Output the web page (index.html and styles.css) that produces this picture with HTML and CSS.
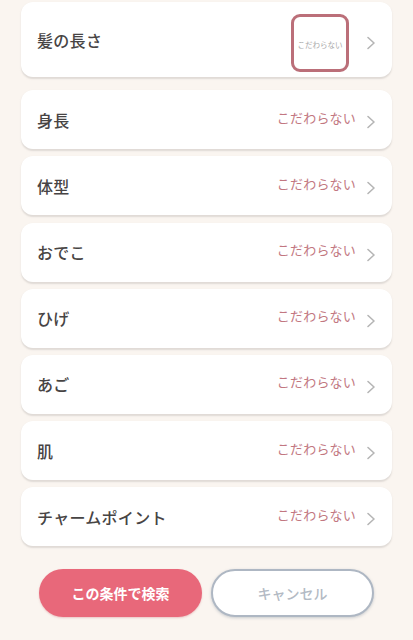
FILE: index.html
```html
<!DOCTYPE html>
<html lang="ja">
<head>
<meta charset="utf-8">
<link rel="stylesheet" href="styles.css">
</head>
<body>
<div class="page">
  <div class="list">
    <div class="card card-first">
      <span class="label">髪の長さ</span>
      <div class="right">
        <div class="focus-box"><span class="tiny">こだわらない</span></div>
        <svg class="chev chev-first" viewBox="0 0 10 14" width="10" height="14"><path d="M2 1.5 L8 7 L2 12.5" fill="none" stroke="#b5b5b5" stroke-width="1.6" stroke-linecap="round" stroke-linejoin="round"/></svg>
      </div>
    </div>
    <div class="card"><span class="label">身長</span><div class="right"><span class="value">こだわらない</span><svg class="chev" viewBox="0 0 10 14" width="10" height="14"><path d="M2 1.5 L8 7 L2 12.5" fill="none" stroke="#b5b5b5" stroke-width="1.6" stroke-linecap="round" stroke-linejoin="round"/></svg></div></div>
    <div class="card"><span class="label">体型</span><div class="right"><span class="value">こだわらない</span><svg class="chev" viewBox="0 0 10 14" width="10" height="14"><path d="M2 1.5 L8 7 L2 12.5" fill="none" stroke="#b5b5b5" stroke-width="1.6" stroke-linecap="round" stroke-linejoin="round"/></svg></div></div>
    <div class="card"><span class="label">おでこ</span><div class="right"><span class="value">こだわらない</span><svg class="chev" viewBox="0 0 10 14" width="10" height="14"><path d="M2 1.5 L8 7 L2 12.5" fill="none" stroke="#b5b5b5" stroke-width="1.6" stroke-linecap="round" stroke-linejoin="round"/></svg></div></div>
    <div class="card"><span class="label">ひげ</span><div class="right"><span class="value">こだわらない</span><svg class="chev" viewBox="0 0 10 14" width="10" height="14"><path d="M2 1.5 L8 7 L2 12.5" fill="none" stroke="#b5b5b5" stroke-width="1.6" stroke-linecap="round" stroke-linejoin="round"/></svg></div></div>
    <div class="card"><span class="label">あご</span><div class="right"><span class="value">こだわらない</span><svg class="chev" viewBox="0 0 10 14" width="10" height="14"><path d="M2 1.5 L8 7 L2 12.5" fill="none" stroke="#b5b5b5" stroke-width="1.6" stroke-linecap="round" stroke-linejoin="round"/></svg></div></div>
    <div class="card"><span class="label">肌</span><div class="right"><span class="value">こだわらない</span><svg class="chev" viewBox="0 0 10 14" width="10" height="14"><path d="M2 1.5 L8 7 L2 12.5" fill="none" stroke="#b5b5b5" stroke-width="1.6" stroke-linecap="round" stroke-linejoin="round"/></svg></div></div>
    <div class="card"><span class="label">チャームポイント</span><div class="right"><span class="value">こだわらない</span><svg class="chev" viewBox="0 0 10 14" width="10" height="14"><path d="M2 1.5 L8 7 L2 12.5" fill="none" stroke="#b5b5b5" stroke-width="1.6" stroke-linecap="round" stroke-linejoin="round"/></svg></div></div>
  </div>
  <div class="actions">
    <button class="btn btn-primary">この条件で検索</button>
    <button class="btn btn-cancel">キャンセル</button>
  </div>
</div>
</body>
</html>
```
FILE: styles.css
```css
html, body {
  margin: 0;
  padding: 0;
  background: #faf5f0;
  font-family: "Noto Sans CJK JP", "Noto Sans", sans-serif;
}
.page {
  width: 413px;
  height: 640px;
  box-sizing: border-box;
  padding: 2px 21px 0 21px;
  overflow: hidden;
}
.list {
  display: flex;
  flex-direction: column;
  gap: 7.2px;
}
.card {
  height: 59px;
  background: #ffffff;
  border-radius: 12px;
  box-shadow: 0 1.5px 1.5px rgba(175, 170, 165, 0.35);
  display: flex;
  align-items: center;
  justify-content: space-between;
  padding: 0 16px 0 16px;
  box-sizing: border-box;
}
.card-first {
  height: 75px;
  margin-bottom: 6px;
}
.label {
  font-size: 16px;
  font-weight: 500;
  color: #474444;
  letter-spacing: 0.3px;
}
.right {
  display: flex;
  align-items: center;
}
.value {
  font-size: 13px;
  color: #c27781;
  letter-spacing: 0.2px;
  margin-top: -5px;
}
.chev {
  margin-left: 10px;
  margin-top: 5px;
}
.chev-first {
  margin-left: 17px;
  margin-top: 6px;
}
.focus-box {
  width: 58px;
  height: 58px;
  box-sizing: border-box;
  border: 3px solid #bb6f79;
  border-radius: 9px;
  display: flex;
  align-items: center;
  justify-content: center;
  margin-top: 7px;
}
.tiny {
  font-size: 7.5px;
  color: #a8a8a8;
  white-space: nowrap;
  margin-top: 2px;
}
.actions {
  display: flex;
  justify-content: center;
  gap: 9px;
  margin-top: 23px;
}
.btn {
  width: 163px;
  height: 48px;
  border-radius: 24px;
  font-family: "Noto Sans CJK JP", "Noto Sans", sans-serif;
  font-size: 14px;
  font-weight: 700;
  box-sizing: border-box;
  cursor: pointer;
}
.btn-primary {
  background: #e8687a;
  color: #ffffff;
  border: none;
  box-shadow: 0 1px 2px rgba(200, 90, 100, 0.3);
}
.btn-cancel {
  background: #ffffff;
  color: #b3bac4;
  font-weight: 500;
  border: 2px solid #aeb7c3;
  box-shadow: 0 1px 3px rgba(140, 150, 165, 0.45);
}
```
